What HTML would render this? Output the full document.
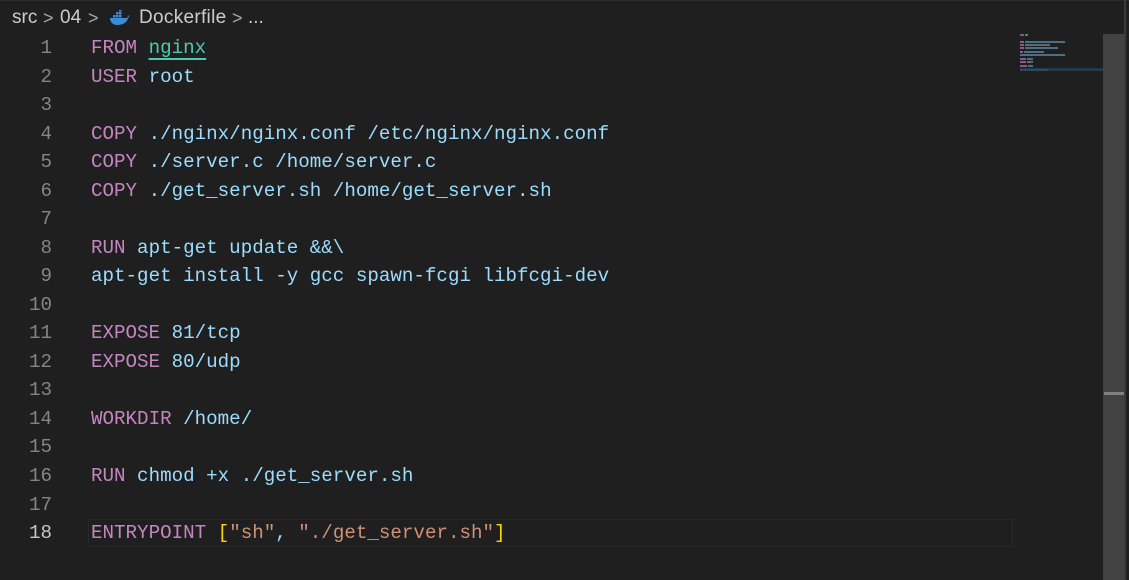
<!DOCTYPE html>
<html><head><meta charset="utf-8"><style>
html,body{margin:0;padding:0;background:#1f1f1f;width:1129px;height:580px;overflow:hidden;position:relative}
.top{position:absolute;left:0;top:0;width:1129px;height:1px;background:#2b2b2b}
.bc span{position:absolute;top:6px;font-family:"Liberation Sans",sans-serif;font-size:19px;color:#cccccc;white-space:nowrap;line-height:24px}
.bc .s{color:#a8a8a8;font-size:18px}
.ln{position:absolute;left:0;width:52px;text-align:right;font-family:"Liberation Mono",monospace;font-size:19.2px;color:#858585;line-height:28.53px}
.code{position:absolute;left:91px;top:34px;font-family:"Liberation Mono",monospace;font-size:19.2px;line-height:28.53px;color:#9cdcfe;white-space:pre}
.k{color:#c586c0}.t{color:#4ec9b0;text-decoration:underline;text-underline-offset:5px;text-decoration-thickness:2px}.str{color:#ce9178}.b{color:#ffd700}
.cur{position:absolute;left:88px;top:519px;width:923px;height:26px;border:1px solid #282828}
.track{position:absolute;left:1103px;top:34px;width:21px;height:546px;background:#424242}
.mark{position:absolute;left:1104px;top:392px;width:20px;height:3px;background:#808080}
.edge{position:absolute;left:1124px;top:0;width:2px;height:580px;background:#3a3a3a}
.mm div{position:absolute;height:2px}
</style></head><body>
<div class="top"></div>
<div class="bc">
<span style="left:12px">src</span>
<span class="s" style="left:43px">&gt;</span>
<span style="left:60px">04</span>
<span class="s" style="left:88px">&gt;</span>
<span style="left:109px;top:9px"><svg width="22" height="16" viewBox="0 0 22 16"><path d="M1 8h17c1-2 2-3 3-3-1 1-1 2-2 3-1 5-6 7-11 7C4 15 1 12 1 8z" fill="#3b8ed6"/><rect x="4" y="5" width="2.5" height="2.5" fill="#3b8ed6"/><rect x="7" y="5" width="2.5" height="2.5" fill="#3b8ed6"/><rect x="10" y="5" width="2.5" height="2.5" fill="#3b8ed6"/><rect x="7" y="2" width="2.5" height="2.5" fill="#3b8ed6"/><rect x="10" y="2" width="2.5" height="2.5" fill="#3b8ed6"/><rect x="10" y="-1" width="2.5" height="2.5" fill="#3b8ed6"/></svg></span>
<span style="left:139px;letter-spacing:0.3px">Dockerfile</span>
<span class="s" style="left:232px">&gt;</span>
<span style="left:248px">...</span>
</div>
<div class="cur"></div>
<div class="ln" style="top:34px">1<br>2<br>3<br>4<br>5<br>6<br>7<br>8<br>9<br>10<br>11<br>12<br>13<br>14<br>15<br>16<br>17<br><span style="color:#c6c6c6">18</span></div>
<div class="code"><span class="k">FROM</span> <span class="t">nginx</span>
<span class="k">USER</span> root

<span class="k">COPY</span> ./nginx/nginx.conf /etc/nginx/nginx.conf
<span class="k">COPY</span> ./server.c /home/server.c
<span class="k">COPY</span> ./get_server.sh /home/get_server.sh

<span class="k">RUN</span> apt-get update &amp;&amp;\
apt-get install -y gcc spawn-fcgi libfcgi-dev

<span class="k">EXPOSE</span> 81/tcp
<span class="k">EXPOSE</span> 80/udp

<span class="k">WORKDIR</span> /home/

<span class="k">RUN</span> chmod +x ./get_server.sh

<span class="k">ENTRYPOINT</span> <span class="b">[</span><span class="str">"sh"</span>, <span class="str">"./get_server.sh"</span><span class="b">]</span></div>
<div class="mm">
<div style="left:1020px;top:34px;width:4px;background:#8a5a86"></div><div style="left:1025px;top:34px;width:3px;background:#3f8a7a"></div>
<div style="left:1020px;top:41px;width:4px;background:#8a5a86"></div><div style="left:1025px;top:41px;width:40px;background:#4f6f80"></div>
<div style="left:1020px;top:44px;width:4px;background:#8a5a86"></div><div style="left:1025px;top:44px;width:25px;background:#4f6f80"></div>
<div style="left:1020px;top:47px;width:4px;background:#8a5a86"></div><div style="left:1025px;top:47px;width:33px;background:#4f6f80"></div>
<div style="left:1020px;top:51px;width:3px;background:#8a5a86"></div><div style="left:1024px;top:51px;width:20px;background:#4f6f80"></div>
<div style="left:1020px;top:54px;width:45px;background:#4f6f80"></div>
<div style="left:1020px;top:58px;width:6px;background:#8a5a86"></div><div style="left:1027px;top:58px;width:6px;background:#4f6f80"></div>
<div style="left:1020px;top:61px;width:6px;background:#8a5a86"></div><div style="left:1027px;top:61px;width:6px;background:#4f6f80"></div>
<div style="left:1020px;top:65px;width:7px;background:#8a5a86"></div><div style="left:1028px;top:65px;width:5px;background:#4f6f80"></div>
<div style="left:1020px;top:69px;width:3px;background:#8a5a86"></div><div style="left:1024px;top:69px;width:24px;background:#4f6f80"></div>
<div style="left:1020px;top:68px;width:83px;height:3px;background:#264055;opacity:.8"></div>
</div>
<div class="track"></div>
<div class="mark"></div>
<div class="edge"></div>
</body></html>
